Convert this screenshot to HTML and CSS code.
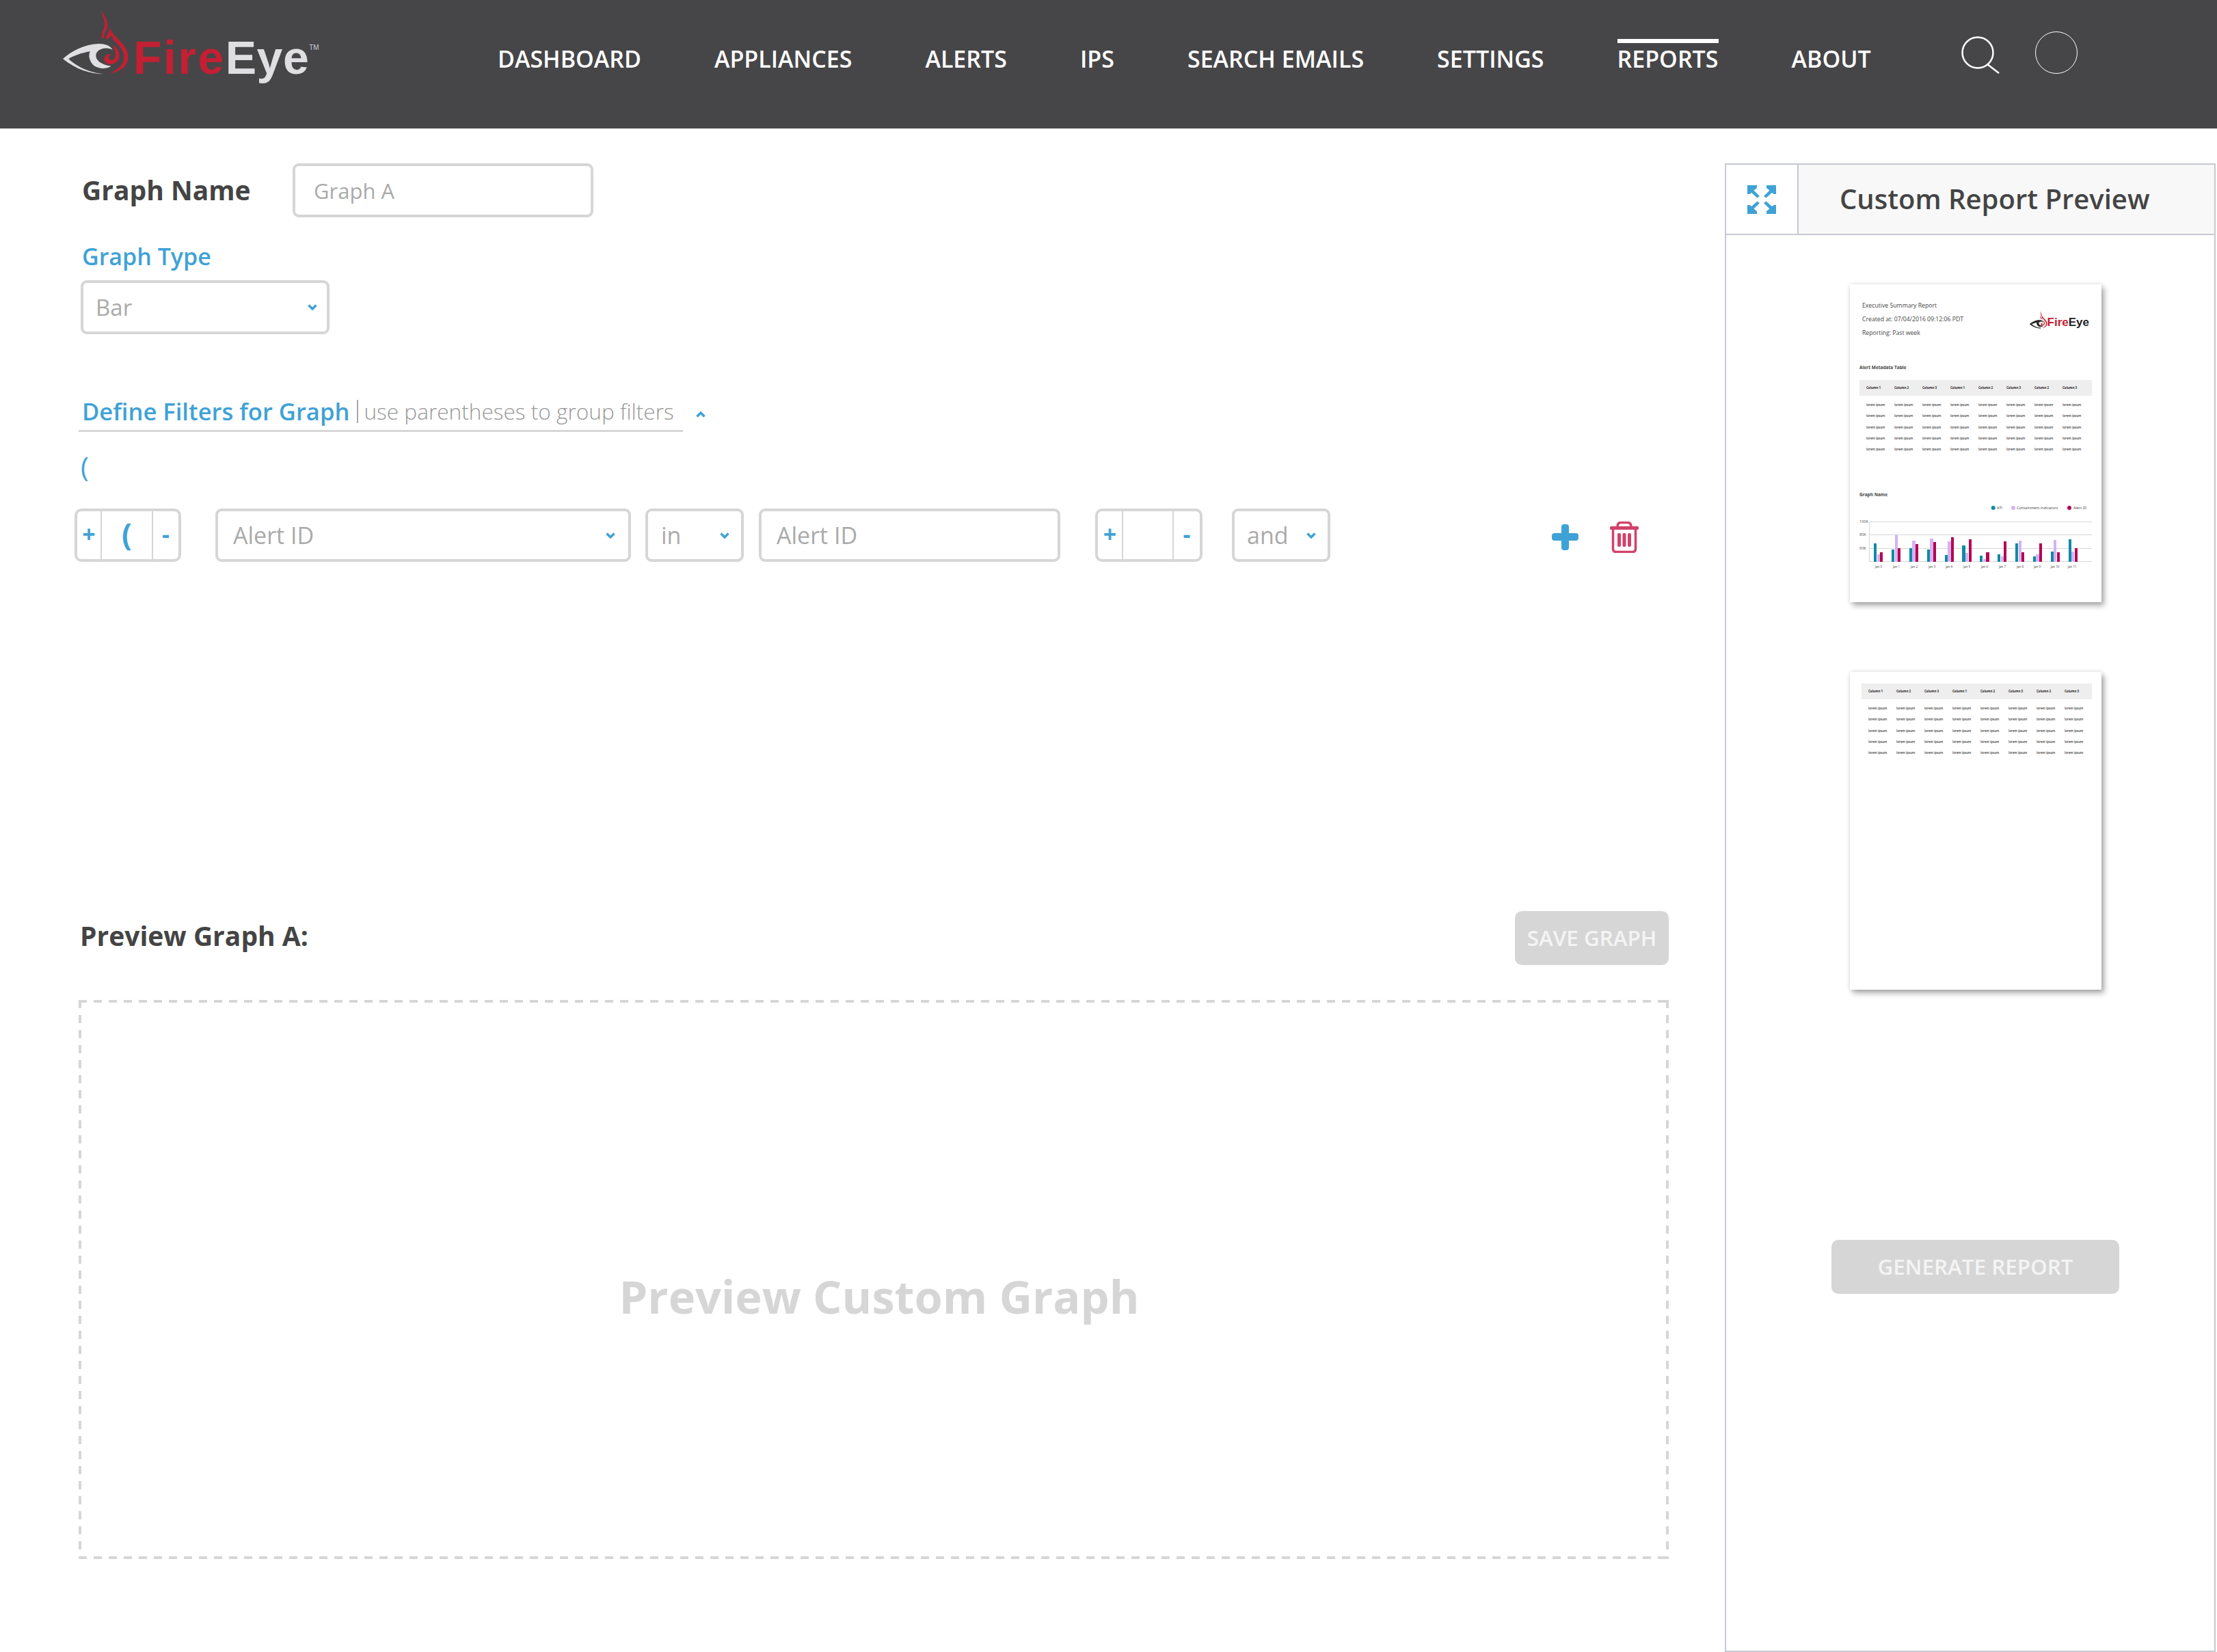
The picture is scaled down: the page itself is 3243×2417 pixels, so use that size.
FILE: index.html
```html
<!DOCTYPE html>
<html lang="en">
<head>
  <meta charset="UTF-8" />
  <title>FireEye - Custom Report</title>
  <link rel="stylesheet" href="styles.css">
</head>
<body>
  <!-- shared icons -->
  <svg class="sprite" aria-hidden="true">
    <symbol id="eye" viewBox="90 45 295 285">
      <path class="eye-white" d="M93 258C130 225 185 195 250 192C280 192 300 200 312 218C285 205 250 212 240 235C232 262 260 285 305 290C290 305 240 305 222 280C208 262 205 240 213 226C175 232 140 245 118 258C150 290 210 320 272 325C215 325 150 305 93 258Z"/>
      <path class="eye-red" d="M265 47C275 70 292 90 290 115C285 135 270 145 275 170L263 165C262 140 285 120 275 90C270 75 265 60 265 47Z"/>
      <path class="eye-red" d="M300 118C305 135 310 145 330 165C360 195 382 220 380 255C378 290 345 315 300 323C335 305 362 285 362 250C362 220 340 200 315 175L308 155L290 172L283 168C285 150 300 140 300 118Z"/>
      <path class="eye-red" d="M310 197C335 210 345 230 340 255C330 285 290 290 278 270C268 250 285 235 305 240C295 245 290 255 300 262C315 268 325 255 325 240C325 225 318 210 310 197Z"/>
    </symbol>
    <symbol id="chevron" viewBox="0 0 14 9">
      <polyline points="1.5,1.5 7,7 12.5,1.5" fill="none" stroke="currentColor" stroke-width="3.5"/>
    </symbol>
  </svg>

  <header class="topbar">
    <div class="logo">
      <svg class="logo-eye"><use href="#eye"/></svg>
      <div class="logo-text"><span class="fire">Fire</span><span class="eye">Eye</span><span class="tm">TM</span></div>
    </div>
    <nav class="nav">
      <a>DASHBOARD</a>
      <a>APPLIANCES</a>
      <a>ALERTS</a>
      <a>IPS</a>
      <a>SEARCH EMAILS</a>
      <a>SETTINGS</a>
      <a class="active">REPORTS</a>
      <a>ABOUT</a>
    </nav>
    <svg class="search-icon" viewBox="0 0 57 56">
      <circle cx="24" cy="24" r="22.5" fill="none" stroke="#fff" stroke-width="2.5"/>
      <line x1="38" y1="41" x2="55" y2="54" stroke="#fff" stroke-width="2.5"/>
    </svg>
    <div class="user-circle"></div>
  </header>

  <main class="main">
    <section class="editor">
      <div class="name-row">
        <label class="name-label">Graph Name</label>
        <div class="box name-input">Graph A</div>
      </div>

      <div class="type-label">Graph Type</div>
      <div class="box type-select">Bar<svg class="caret"><use href="#chevron"/></svg></div>

      <div class="filter-head">
        <div class="filter-title"><b>Define Filters for Graph</b><i></i><span>use parentheses to group filters</span></div>
        <svg class="caret up"><use href="#chevron"/></svg>
      </div>
      <div class="paren">(</div>

      <div class="filter-row">
        <div class="stepper first"><span>+</span><span class="paren-cell">(</span><span>-</span></div>
        <div class="box field-select">Alert ID<svg class="caret"><use href="#chevron"/></svg></div>
        <div class="box op-select">in<svg class="caret"><use href="#chevron"/></svg></div>
        <div class="box value-input">Alert ID</div>
        <div class="stepper second"><span>+</span><span></span><span>-</span></div>
        <div class="box join-select">and<svg class="caret"><use href="#chevron"/></svg></div>
        <svg class="add-icon" viewBox="0 0 39 38"><rect x="14" width="11" height="38" rx="4"/><rect y="13" width="39" height="11" rx="4"/></svg>
        <svg class="trash-icon" viewBox="0 0 42 46">
          <rect y="7" width="42" height="5" rx="1.5" class="trash-fill"/>
          <path d="M11 8C11 3 13 1.5 16 1.5H26C29 1.5 31 3 31 8" class="trash-line"/>
          <path d="M4.5 12V40Q4.5 44.5 9 44.5H33Q37.5 44.5 37.5 40V12" class="trash-line"/>
          <rect x="11" y="17" width="5" height="20" rx="2" class="trash-fill"/>
          <rect x="18.5" y="17" width="5" height="20" rx="2" class="trash-fill"/>
          <rect x="26" y="17" width="5" height="20" rx="2" class="trash-fill"/>
        </svg>
      </div>

      <div class="preview-head">
        <h2>Preview Graph A:</h2>
        <button class="btn save">SAVE GRAPH</button>
      </div>
      <div class="drop-zone">Preview Custom Graph</div>
    </section>

    <aside class="panel">
      <div class="panel-head">
        <div class="panel-toggle">
          <svg class="expand-icon" viewBox="0 0 42 42">
            <path id="arrow" d="M0 0H14V4L9.5 7.5L18 16L14.5 18.500L6 11L3.500 13H0Z"/>
            <use href="#arrow" transform="matrix(-1 0 0 1 42 0)"/>
            <use href="#arrow" transform="matrix(1 0 0 -1 0 42)"/>
            <use href="#arrow" transform="matrix(-1 0 0 -1 42 42)"/>
          </svg>
        </div>
        <h3>Custom Report Preview</h3>
      </div>
      <div class="panel-body">
        <div class="page">
          <div class="page-head">
            <div class="page-lines">
              <div>Executive Summary Report</div>
              <div>Created at: 07/04/2016 09:12:06 PDT</div>
              <div>Reporting: Past week</div>
            </div>
            <div class="mini-logo">
              <svg class="mini-eye"><use href="#eye"/></svg>
              <div class="mini-text"><span class="fire">Fire</span>Eye</div>
            </div>
          </div>
          <div class="page-title table-title">Alert Metadata Table</div>
          <div class="mini-table">
            <div class="mini-row mini-th"><span>Column 1</span><span>Column 2</span><span>Column 3</span><span>Column 1</span><span>Column 2</span><span>Column 3</span><span>Column 2</span><span>Column 3</span></div>
            <div class="mini-row"><span>lorem ipsum</span><span>lorem ipsum</span><span>lorem ipsum</span><span>lorem ipsum</span><span>lorem ipsum</span><span>lorem ipsum</span><span>lorem ipsum</span><span>lorem ipsum</span></div>
            <div class="mini-row"><span>lorem ipsum</span><span>lorem ipsum</span><span>lorem ipsum</span><span>lorem ipsum</span><span>lorem ipsum</span><span>lorem ipsum</span><span>lorem ipsum</span><span>lorem ipsum</span></div>
            <div class="mini-row"><span>lorem ipsum</span><span>lorem ipsum</span><span>lorem ipsum</span><span>lorem ipsum</span><span>lorem ipsum</span><span>lorem ipsum</span><span>lorem ipsum</span><span>lorem ipsum</span></div>
            <div class="mini-row"><span>lorem ipsum</span><span>lorem ipsum</span><span>lorem ipsum</span><span>lorem ipsum</span><span>lorem ipsum</span><span>lorem ipsum</span><span>lorem ipsum</span><span>lorem ipsum</span></div>
            <div class="mini-row"><span>lorem ipsum</span><span>lorem ipsum</span><span>lorem ipsum</span><span>lorem ipsum</span><span>lorem ipsum</span><span>lorem ipsum</span><span>lorem ipsum</span><span>lorem ipsum</span></div>
          </div>
          <div class="page-title graph-title">Graph Name</div>
          <svg class="mini-chart" viewBox="0 0 340 102">
            <circle cx="195.700" cy="8" r="3" class="teal"/><text x="201" y="10">ATI</text>
            <circle cx="225" cy="8" r="3" class="lav"/><text x="230" y="10">Containment indicators</text>
            <circle cx="307" cy="8" r="3" class="mag"/><text x="313" y="10">Alert ID</text>

            <line x1="14" y1="28.500" x2="340" y2="28.500" class="grid"/>
            <line x1="14" y1="47.500" x2="340" y2="47.500" class="grid"/>
            <line x1="14" y1="67.500" x2="340" y2="67.500" class="grid"/>
            <line x1="14" y1="86.500" x2="340" y2="86.500" class="grid"/>
            <line x1="14.500" y1="28" x2="14.500" y2="87" class="grid"/>
            <text x="0" y="30">100K</text><text x="0" y="49">80K</text><text x="0" y="69">60K</text>

            <g transform="translate(21)"><rect y="60" width="4" height="27" class="teal"/><rect x="5" y="76" width="4" height="11" class="lav"/><rect x="9" y="73" width="4" height="14" class="mag"/></g>
            <g transform="translate(47)"><rect y="69" width="4" height="18" class="teal"/><rect x="5" y="48" width="4" height="39" class="lav"/><rect x="9" y="67" width="4" height="20" class="mag"/></g>
            <g transform="translate(73)"><rect y="67" width="4" height="20" class="teal"/><rect x="4" y="56" width="5" height="31" class="lav"/><rect x="9" y="61" width="4" height="26" class="mag"/></g>
            <g transform="translate(99)"><rect y="69" width="4" height="18" class="teal"/><rect x="4" y="53" width="5" height="34" class="lav"/><rect x="9" y="58" width="4" height="29" class="mag"/></g>
            <g transform="translate(125)"><rect y="77" width="4" height="10" class="teal"/><rect x="4" y="57" width="5" height="30" class="lav"/><rect x="9" y="51" width="4" height="36" class="mag"/></g>
            <g transform="translate(150)"><rect y="63" width="5" height="24" class="teal"/><rect x="5" y="74" width="4" height="13" class="lav"/><rect x="10" y="54" width="4" height="33" class="mag"/></g>
            <g transform="translate(176)"><rect y="78" width="4" height="9" class="teal"/><rect x="5" y="83" width="4" height="4" class="lav"/><rect x="9" y="73" width="5" height="14" class="mag"/></g>
            <g transform="translate(202)"><rect y="76" width="4" height="11" class="teal"/><rect x="5" y="79" width="4" height="8" class="lav"/><rect x="9" y="57" width="4" height="30" class="mag"/></g>
            <g transform="translate(228)"><rect y="60" width="4" height="27" class="teal"/><rect x="5" y="56" width="4" height="31" class="lav"/><rect x="9" y="73" width="4" height="14" class="mag"/></g>
            <g transform="translate(254)"><rect y="79" width="4" height="8" class="teal"/><rect x="4" y="76" width="5" height="11" class="lav"/><rect x="9" y="60" width="4" height="27" class="mag"/></g>
            <g transform="translate(280)"><rect y="72" width="4" height="15" class="teal"/><rect x="4" y="55" width="4" height="32" class="lav"/><rect x="9" y="73" width="4" height="14" class="mag"/></g>
            <g transform="translate(306)"><rect y="54" width="4" height="33" class="teal"/><rect x="4" y="72" width="4" height="15" class="lav"/><rect x="9" y="67" width="4" height="20" class="mag"/></g>

            <g class="ticks">
              <text x="28" y="96">Jan 0</text><text x="54" y="96">Jan 1</text><text x="80" y="96">Jan 2</text><text x="106" y="96">Jan 3</text><text x="131" y="96">Jan 4</text><text x="157" y="96">Jan 5</text><text x="183" y="96">Jan 6</text><text x="209" y="96">Jan 7</text><text x="235" y="96">Jan 8</text><text x="260" y="96">Jan 9</text><text x="286" y="96">Jan 10</text><text x="311" y="96">Jan 11</text>
            </g>
          </svg>
        </div>

        <div class="page second-page">
          <div class="mini-table">
            <div class="mini-row mini-th"><span>Column 1</span><span>Column 2</span><span>Column 3</span><span>Column 1</span><span>Column 2</span><span>Column 3</span><span>Column 2</span><span>Column 3</span></div>
            <div class="mini-row"><span>lorem ipsum</span><span>lorem ipsum</span><span>lorem ipsum</span><span>lorem ipsum</span><span>lorem ipsum</span><span>lorem ipsum</span><span>lorem ipsum</span><span>lorem ipsum</span></div>
            <div class="mini-row"><span>lorem ipsum</span><span>lorem ipsum</span><span>lorem ipsum</span><span>lorem ipsum</span><span>lorem ipsum</span><span>lorem ipsum</span><span>lorem ipsum</span><span>lorem ipsum</span></div>
            <div class="mini-row"><span>lorem ipsum</span><span>lorem ipsum</span><span>lorem ipsum</span><span>lorem ipsum</span><span>lorem ipsum</span><span>lorem ipsum</span><span>lorem ipsum</span><span>lorem ipsum</span></div>
            <div class="mini-row"><span>lorem ipsum</span><span>lorem ipsum</span><span>lorem ipsum</span><span>lorem ipsum</span><span>lorem ipsum</span><span>lorem ipsum</span><span>lorem ipsum</span><span>lorem ipsum</span></div>
            <div class="mini-row"><span>lorem ipsum</span><span>lorem ipsum</span><span>lorem ipsum</span><span>lorem ipsum</span><span>lorem ipsum</span><span>lorem ipsum</span><span>lorem ipsum</span><span>lorem ipsum</span></div>
          </div>
        </div>

        <button class="btn generate">GENERATE REPORT</button>
      </div>
    </aside>
  </main>
</body>
</html>
```

FILE: styles.css
```css
html, body {
  margin: 0;
  padding: 0;
  height: 100%;
  background: #fff;
  font-family: "Open Sans", sans-serif;
  box-sizing: border-box;
}
*, *::before, *::after {
  box-sizing: inherit;
}
body {
  display: flex;
  flex-direction: column;
  min-height: 2417px;
}
.sprite {
  display: none;
}

/* Top bar */
.topbar {
  display: flex;
  flex: 0 0 188px;
  align-items: flex-start;
  padding-left: 91px;
  background: #464648;
}
.logo {
  display: flex;
  flex: 0 0 637px;
  align-items: flex-start;
}
.logo-eye {
  width: 98px;
  height: 95px;
  margin-top: 15px;
  color: #dfdfe3;
}
.eye-white { fill: currentColor; }
.eye-red { fill: #c41f32; stroke: none; }
.logo-text {
  margin: 50px 0 0 6px;
  font: bold 68px/1 "Liberation Sans", sans-serif;
  color: #dfdfe3;
  white-space: nowrap;
}
.logo-text .fire {
  color: #c41f32;
  letter-spacing: 2.500px;
}
.logo-text .eye {
  letter-spacing: 0.500px;
}
.tm {
  font-size: 10px;
  font-weight: normal;
  line-height: 0;
  vertical-align: 35px;
  color: #cfcfd3;
}
.nav {
  display: flex;
  gap: 107px;
  margin-top: 57px;
  font-size: 34px;
  font-weight: 600;
  line-height: 44px;
  color: #fff;
}
.nav a {
  padding-top: 1px;
  border-top: 6px solid transparent;
  white-space: nowrap;
}
.nav a.active {
  border-top-color: #fff;
}
.search-icon {
  width: 57px;
  height: 56px;
  margin: 53px 0 0 132px;
}
.user-circle {
  width: 62px;
  height: 62px;
  margin: 46px 0 0 51px;
  border: 1px solid #fff;
  border-radius: 50%;
}

/* Main area */
.main {
  display: flex;
  flex: 1;
  align-items: stretch;
  padding: 51px 2px 0 0;
}
.editor {
  flex: 0 0 2326px;
  margin: 0 82px 0 115px;
}
.box {
  display: flex;
  align-items: center;
  height: 79px;
  border: 4px solid #d6d6d6;
  border-radius: 9px;
  font-size: 33px;
  color: #aaa;
  background: #fff;
}
.caret {
  width: 14px;
  height: 9px;
  margin-left: auto;
  color: #3fa2d6;
  flex: none;
}
.caret.up {
  margin: 0 0 0 19px;
  transform: rotate(180deg);
}

.name-row {
  display: flex;
  align-items: center;
  padding-left: 5px;
}
.name-label {
  flex: 0 0 308px;
  margin-bottom: 2px;
  font-size: 39px;
  font-weight: 700;
  color: #444;
}
.name-input {
  width: 440px;
  padding-left: 27px;
  font-size: 31px;
}
.type-label {
  margin: 35px 0 13px 5px;
  font-size: 34px;
  font-weight: 600;
  line-height: 44px;
  color: #3fa2d6;
}
.type-select {
  width: 364px;
  margin-left: 3px;
  padding: 0 14px 0 18px;
}
.filter-head {
  display: flex;
  align-items: center;
  margin-top: 91px;
}
.filter-title {
  display: flex;
  align-items: center;
  width: 884px;
  height: 52px;
  padding: 0 0 5px 5px;
  border-bottom: 3px solid #d6d6d6;
  line-height: 44px;
  white-space: nowrap;
}
.filter-title b {
  font-size: 34.600px;
  font-weight: 600;
  color: #3fa2d6;
}
.filter-title i {
  width: 2px;
  height: 34px;
  margin: 0 8px 0 11px;
  background: #aaa;
}
.filter-title span {
  font-size: 31.600px;
  font-weight: 300;
  color: #999;
}
.paren {
  margin: 28px 0 0 3px;
  font-size: 40px;
  line-height: 46px;
  color: #3fa2d6;
}

/* Filter row */
.filter-row {
  display: flex;
  align-items: flex-start;
  height: 78px;
  margin: 38px 0 0 -6px;
}
.filter-row .box {
  height: 78px;
  font-size: 34px;
}
.stepper {
  display: grid;
  height: 78px;
  border: 4px solid #d6d6d6;
  border-radius: 10px;
  font-size: 34px;
  font-weight: 700;
  line-height: 66px;
  text-align: center;
  color: #3fa2d6;
}
.stepper span + span {
  border-left: 2px solid #d6d6d6;
}
.stepper.first {
  grid-template-columns: 34px 75px 1fr;
  width: 156px;
}
.stepper.second {
  grid-template-columns: 35px 74px 1fr;
  width: 157px;
  margin-left: 51px;
}
.paren-cell {
  font-size: 44px;
}
.field-select {
  width: 608px;
  margin-left: 50px;
  padding: 0 19px 0 22px;
}
.op-select {
  width: 144px;
  margin-left: 21px;
  padding: 0 17px 0 19px;
}
.value-input {
  width: 441px;
  margin-left: 22px;
  padding-left: 22px;
}
.join-select {
  width: 144px;
  margin-left: 43px;
  padding: 0 17px 0 18px;
}
.add-icon {
  width: 39px;
  height: 38px;
  margin: 23px 0 0 324px;
  fill: #3fa2d6;
}
.trash-icon {
  width: 42px;
  height: 46px;
  margin: 19px 0 0 46px;
}
.trash-fill { fill: #d2426a; }
.trash-line {
  fill: none;
  stroke: #d2426a;
  stroke-width: 3.5;
}

/* Graph preview */
.preview-head {
  display: flex;
  align-items: center;
  justify-content: space-between;
  margin-top: 511px;
  padding-left: 2px;
}
.preview-head h2 {
  margin: 0 0 8px;
  font-size: 39px;
  font-weight: 700;
  color: #444;
}
.btn {
  border: 0;
  border-radius: 10px;
  background: #d6d6d6;
  color: #f4f4f4;
  font-family: inherit;
  font-weight: 600;
  padding: 0 0 3px;
}
.save {
  width: 225px;
  height: 79px;
  font-size: 31.400px;
}
.drop-zone {
  display: flex;
  align-items: center;
  justify-content: center;
  height: 818px;
  margin-top: 51px;
  padding: 48px 0 0 16px;
  font-size: 66.700px;
  font-weight: 700;
  color: #d6d6d6;
  background-image:
    repeating-linear-gradient(to right, #d6d6d6 0 12px, transparent 12px 22px),
    repeating-linear-gradient(to right, #d6d6d6 0 12px, transparent 12px 22px),
    repeating-linear-gradient(to bottom, #d6d6d6 0 12px, transparent 12px 22px),
    repeating-linear-gradient(to bottom, #d6d6d6 0 12px, transparent 12px 22px);
  background-size: 100% 4px, 100% 4px, 4px 100%, 4px 100%;
  background-position: top, bottom, left, right;
  background-repeat: no-repeat;
}

/* Right panel */
.panel {
  display: flex;
  flex: 0 0 718px;
  flex-direction: column;
  border: 2px solid #c6c8d2;
}
.panel-head {
  display: flex;
  flex: 0 0 103px;
  border-bottom: 2px solid #c6c8d2;
}
.panel-toggle {
  display: flex;
  flex: 0 0 106px;
  align-items: center;
  justify-content: center;
  border-right: 2px solid #c6c8d2;
}
.expand-icon {
  width: 42px;
  height: 42px;
  fill: #3fa2d6;
}
.panel-head h3 {
  flex: 1;
  margin: 0;
  padding-left: 60px;
  font-size: 40px;
  font-weight: 600;
  line-height: 99px;
  color: #444;
  background: #f8f8f8;
}
.panel-body {
  display: flex;
  flex-direction: column;
  align-items: flex-start;
  padding: 72px 0 0 154px;
}

/* Report thumbnails */
.page {
  width: 368px;
  height: 465px;
  margin-left: 27px;
  background: #fff;
  box-shadow: 4px 5px 8px rgba(0, 0, 0, 0.32), 0 0 6px rgba(0, 0, 0, 0.12);
  color: #444;
}
.second-page {
  margin-top: 102px;
  padding-top: 17px;
}
.page-head {
  display: flex;
  justify-content: space-between;
  height: 60px;
  padding: 21px 18px 0 18px;
  box-sizing: content-box;
}
.page-lines {
  font-size: 8.700px;
  line-height: 20px;
}
.mini-logo {
  display: flex;
  align-items: flex-start;
  margin-top: 18px;
  color: #222;
}
.mini-eye {
  width: 26px;
  height: 26px;
  stroke: #222;
  stroke-width: 8;
}
.mini-text {
  margin-top: 8px;
  font: bold 17px/1 "Liberation Sans", sans-serif;
}
.mini-text .fire { color: #c41f32; }
.page-title {
  padding-left: 14px;
  font-size: 6.500px;
  font-weight: 700;
  line-height: 12px;
}
.table-title {
  margin-top: 35px;
}
.mini-table {
  width: 340px;
  margin: 12px 0 0 14px;
}
.second-page .mini-table {
  width: 337px;
  margin: 0 0 0 17px;
}
.mini-row {
  display: grid;
  grid-template-columns: repeat(8, 41px);
  height: 16.300px;
  padding-left: 10px;
  font-size: 4.500px;
  font-weight: 600;
  line-height: 16.300px;
  white-space: nowrap;
  color: #333;
}
.mini-th {
  height: 23px;
  margin-bottom: 5px;
  font-weight: 700;
  line-height: 23px;
  background: #eee;
  color: #222;
}
.graph-title {
  margin-top: 53px;
}
.mini-chart {
  display: block;
  width: 340px;
  height: 102px;
  margin: 5px 0 0 14px;
  font-size: 5.500px;
  fill: #444;
}
.mini-chart .ticks {
  font-size: 4.500px;
  text-anchor: middle;
}
.grid {
  stroke: #d6d6d6;
  stroke-width: 1;
}
.teal { fill: #0f8aa5; }
.lav { fill: #d4b3f5; }
.mag { fill: #b5044f; }

.generate {
  width: 421px;
  height: 79px;
  margin: 366px 0 0 0;
  font-size: 31.400px;
}
```
